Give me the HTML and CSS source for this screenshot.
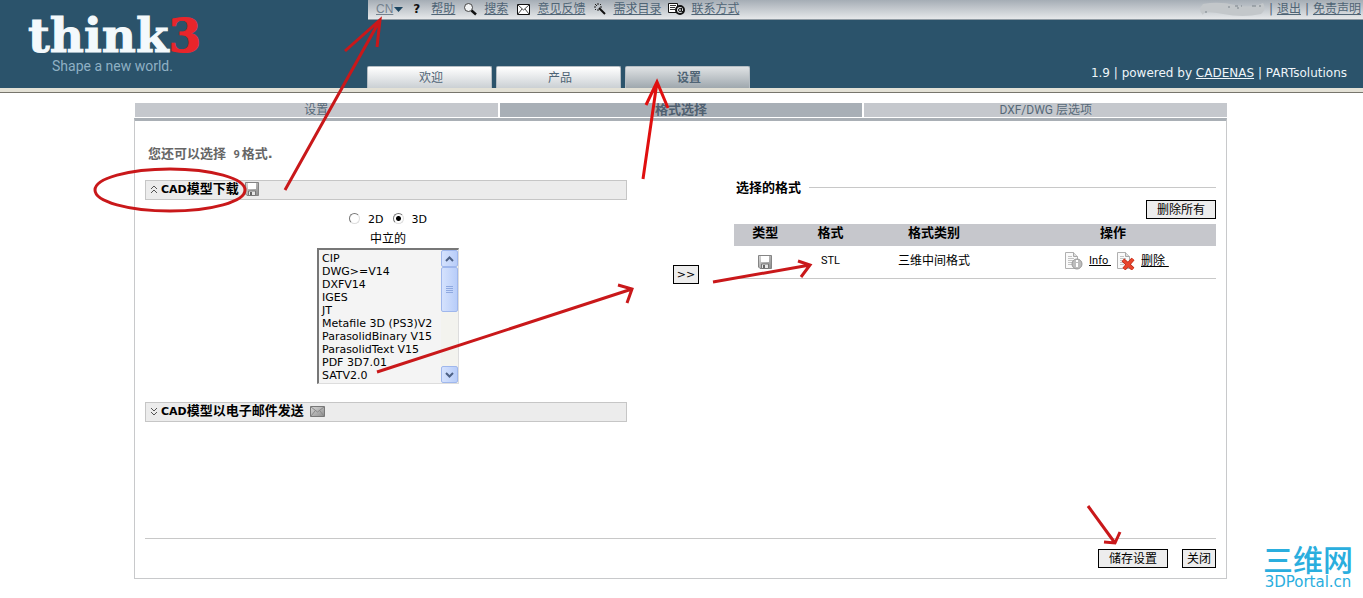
FILE: index.html
```html
<!DOCTYPE html>
<html lang="zh-CN">
<head>
<meta charset="utf-8">
<title>think3 PARTsolutions</title>
<link rel="stylesheet" href="styles.css">
</head>
<body>
<svg class="defs" width="0" height="0" aria-hidden="true">
  <linearGradient id="metal" x1="0" y1="0" x2="1" y2="1"><stop offset="0" stop-color="#d8d8d8"/><stop offset="1" stop-color="#8c8c8c"/></linearGradient>
  <symbol id="disk" viewBox="0 0 14 14">
    <path d="M.5.5h13v13H2L.5 12z" fill="url(#metal)" stroke="#858585"/>
    <path d="M3 1h8v6H3z" fill="#fff"/><path d="M3.500 9h7v4.500h-7z" fill="#e8e8e8" stroke="#777"/><path d="M5 10h2v3H5z" fill="#666"/>
  </symbol>
  <symbol id="sheet" viewBox="0 0 18 18">
    <path d="M.5.5h8l4 4v12H.5z" fill="#fafafa" stroke="#b0b0b0"/>
    <path d="M8.500.5v4h4" fill="#ddd" stroke="#a8a8a8"/>
    <path d="M3 4.500h4M3 6.500h6M3 8.500h6M3 10.500h5M3 12.500h4" fill="none" stroke="#c4c4c4"/>
  </symbol>
</svg>
<header class="header">
  <div class="brand">
    <div class="logo">think<span class="logo-num">3</span></div>
    <div class="slogan">Shape a new world.</div>
  </div>
  <div class="header-main">
    <div class="topbar">
      <nav class="tools">
        <a href="#" class="lang">CN</a>
        <svg class="caret" width="9" height="5" viewBox="0 0 9 5"><path d="M0 0h9L4.500 5z" fill="#1d4661"/></svg>
        <span class="help-mark">?</span>
        <a href="#">帮助</a>
        <svg class="icon" width="13" height="13" viewBox="0 0 13 13"><circle cx="4.500" cy="4.500" r="4" fill="#f2f4f5" stroke="#444"/><path d="M7.500 7.500l4.500 4" stroke="#111" stroke-width="2.500"/></svg>
        <a href="#">搜索</a>
        <svg class="icon" width="13" height="11" viewBox="0 0 13 11"><path d="M.5.5h12v10H.5z" fill="#fff" stroke="#111"/><path d="M1 1l5.500 5L12 1M1 10l4-5M12 10L8 5" fill="none" stroke="#444"/></svg>
        <a href="#">意见反馈</a>
        <svg class="icon" width="12" height="12" viewBox="0 0 12 12"><path d="M5 5l6 6" stroke="#111" stroke-width="2"/><path d="M4 0v2M0 4h2M1 1l2 2M7 1L6 2M1 7l1-1M4 6v2M6 4h2" stroke="#222"/></svg>
        <a href="#">需求目录</a>
        <svg class="icon icon-contact" width="17" height="12" viewBox="0 0 17 12"><path d="M.5.5h9v9h-9z" fill="#fff" stroke="#111"/><path d="M2 2.500h6M2 4.500h5M2 6.500h5" stroke="#333"/><circle cx="12" cy="7" r="4" fill="#dfe2e5" stroke="#111" stroke-width="2"/><circle cx="12" cy="7" r="1.500" fill="none" stroke="#111"/><path d="M13.500 5v3.500h2" fill="none" stroke="#111"/></svg>
        <a href="#">联系方式</a>
      </nav>
      <div class="account">
        <svg class="smudge" width="66" height="16" viewBox="0 0 66 16"><path d="M4 3Q20 0 36 4T64 2Q68 8 62 13Q44 17 24 13T4 14Q-2 9 4 3z" fill="#c3c7ca"/><path d="M29 6h2M36 5h3M38 7h2M42 5h1M53 5h4M60 5h2M6 11h2" stroke="#7b838a"/></svg>
        <span>| <a href="#">退出</a></span><span>|</span><a href="#">免责声明</a>
      </div>
    </div>
    <div class="header-bottom">
      <nav class="tabs">
        <a href="#" class="tab">欢迎</a>
        <a href="#" class="tab">产品</a>
        <a href="#" class="tab tab-active">设置</a>
      </nav>
      <div class="powered">1.9 | powered by <a href="#">CADENAS</a> | PARTsolutions</div>
    </div>
  </div>
</header>
<main class="content">
  <nav class="subtabs">
    <a href="#" class="subtab">设置</a>
    <a href="#" class="subtab subtab-active">格式选择</a>
    <a href="#" class="subtab">DXF/DWG 层选项</a>
  </nav>
  <div class="panel">
    <p class="hint">您还可以选择 <span class="count">9</span>格式.</p>
    <div class="columns">
      <section class="sources">
        <h2 class="bar">
          <svg width="8" height="9" viewBox="0 0 8 9"><path d="M1 4l3-3 3 3M1 8l3-3 3 3" fill="none" stroke="#555"/></svg>
          <span class="bar-title"><span class="latin">CAD</span>模型下载</span>
          <svg width="14" height="14"><use href="#disk"/></svg>
        </h2>
        <div class="picker">
          <div class="radios">
            <input type="radio" name="dim" id="dim2"><label for="dim2">2D</label>
            <input type="radio" name="dim" id="dim3" checked><label for="dim3">3D</label>
          </div>
          <label class="list-label" for="formats">中立的</label>
          <div class="listbox">
            <select id="formats" class="formats" size="10">
              <option>CIP</option><option>DWG&gt;=V14</option><option>DXFV14</option><option>IGES</option><option>JT</option><option>Metafile 3D (PS3)V2</option><option>ParasolidBinary V15</option><option>ParasolidText V15</option><option>PDF 3D7.01</option><option>SATV2.0</option>
            </select>
            <div class="scroll">
              <div class="scroll-btn"><svg width="9" height="6" viewBox="0 0 9 6"><path d="M1 5l3.500-3.500L8 5" fill="none" stroke="#4d6185" stroke-width="2"/></svg></div>
              <div class="thumb"><svg width="7" height="8" viewBox="0 0 7 8"><path d="M0 .5h7M0 2.500h7M0 4.500h7M0 6.500h7" stroke="#8fa9e0"/></svg></div>
              <div class="scroll-gap"></div>
              <div class="scroll-btn"><svg width="9" height="6" viewBox="0 0 9 6"><path d="M1 1l3.500 3.500L8 1" fill="none" stroke="#4d6185" stroke-width="2"/></svg></div>
            </div>
          </div>
        </div>
        <h2 class="bar">
          <svg width="8" height="9" viewBox="0 0 8 9"><path d="M1 1l3 3 3-3M1 5l3 3 3-3" fill="none" stroke="#555"/></svg>
          <span class="bar-title"><span class="latin">CAD</span>模型以电子邮件发送</span>
          <svg width="15" height="11" viewBox="0 0 15 11"><path d="M.5.5h14v10H.5z" fill="url(#metal)" stroke="#777"/><path d="M1 1l6.500 5L14 1M1 10l4-5M14 10l-4-5" fill="none" stroke="#888"/></svg>
        </h2>
      </section>
      <div class="transfer"><button type="button" class="btn btn-add">&gt;&gt;</button></div>
      <section class="selected">
        <h2 class="selected-title">选择的格式</h2>
        <div class="selected-actions"><button type="button" class="btn btn-wide">删除所有</button></div>
        <table class="table">
          <thead><tr><th class="c-type">类型</th><th class="c-format">格式</th><th class="c-class">格式类别</th><th class="c-action">操作</th></tr></thead>
          <tbody><tr>
            <td><svg class="disk" width="14" height="14"><use href="#disk"/></svg></td>
            <td class="small">STL</td>
            <td>三维中间格式</td>
            <td><div class="actions">
              <svg width="18" height="18" viewBox="0 0 18 18"><use href="#sheet" width="18" height="18"/><circle cx="12" cy="12" r="5" fill="#bdbdbd" stroke="#999"/><path d="M12 8v2M12 11v4" stroke="#fff" stroke-width="2"/></svg>
              <a href="#" class="small">Info&nbsp;</a>
              <svg width="18" height="18" viewBox="0 0 18 18"><use href="#sheet" width="18" height="18"/><path d="M6 8l10 9M16 7l-9 10" stroke="#a82010" stroke-width="4"/><path d="M6 8l10 9M16 7l-9 10" stroke="#e8452c" stroke-width="3"/></svg>
              <a href="#">删除&nbsp;</a>
            </div></td>
          </tr></tbody>
        </table>
      </section>
    </div>
    <footer class="footer">
      <button type="button" class="btn btn-wide">储存设置</button>
      <button type="button" class="btn">关闭</button>
    </footer>
  </div>
</main>
<div class="watermark"><div class="wm-name">三维网</div><div class="wm-url">3DPortal.cn</div></div>
<svg class="marks" width="1363" height="598" viewBox="0 0 1363 598" aria-hidden="true">
  <g fill="none" stroke="#c9181a" stroke-width="3">
    <ellipse cx="170" cy="190" rx="75" ry="21"/>
    <path d="M285 190L380 20M345 51L380 20L377 47"/>
    <path d="M377 372L632 289M618 285L632 289L627 303"/>
    <path d="M713 282L810 265M798 261L810 265L801 277"/>
    <path d="M1088 506L1115 543M1104 542L1115 543L1120 532"/>
  </g>
  <path d="M643 179L657 82M646 105L657 82L668 108" fill="none" stroke="#e00f0f" stroke-width="3"/>
</svg>
</body>
</html>
```
FILE: styles.css
```css
* { box-sizing: border-box; }
body {
  margin: 0;
  position: relative;
  display: flow-root;
  min-height: 100vh;
  background: #fff;
  color: #000;
  font: 12px/16px "DejaVu Sans", "Noto Sans CJK SC", sans-serif;
}
.defs { position: absolute; }
svg { flex: none; }
h2, p { margin: 0; }
a { color: inherit; }

.header {
  display: flex;
  height: 93px;
  background: #2b536b;
  border-bottom: 1px solid #77756c;
  box-shadow: inset 0 -4px #e3e1d6;
}
.brand { width: 367px; flex: none; padding: 14px 0 0 28px; }
.logo {
  font: bold 47px/44px "DejaVu Serif", serif;
  color: #f3f9fc;
  -webkit-text-stroke: 1px;
}
.logo-num { color: #e8252b; }
.slogan {
  padding-left: 24px;
  font: 14px/16px Roboto, sans-serif;
  color: #8fb0c4;
}
.header-main { flex: 1; display: flex; flex-direction: column; padding-bottom: 4px; }
.topbar {
  display: flex;
  justify-content: space-between;
  height: 20px;
  margin-left: 1px;
  padding: 0 2px 0 8px;
  background: linear-gradient(#a5adb5, #e6e8ea);
  border-bottom: 1px solid #8f9aa3;
  color: #4f6475;
}
.tools, .account { display: flex; align-items: center; height: 18px; }
.lang { font-family: "Liberation Sans", sans-serif; color: #74828f; }
.caret { margin: 0 10px 0 1px; }
.help-mark { width: 8px; margin-right: 10px; font-weight: bold; color: #111; }
.icon { margin: 0 7px 0 9px; }
.icon-contact { margin: 0 6px 0 7px; }
.account { gap: 4px; }
.header-bottom { flex: 1; display: flex; justify-content: space-between; align-items: flex-end; }
.tabs { display: flex; gap: 4px; }
.tab {
  width: 125px;
  height: 22px;
  padding-left: 3px;
  border: 1px solid #b5bdc3;
  border-bottom: 0;
  border-radius: 2px 2px 0 0;
  background: linear-gradient(#fff, #cbd0d4);
  color: #4f6475;
  line-height: 22px;
  text-align: center;
  text-decoration: none;
}
.tab-active { background: linear-gradient(#dfe2e4, #9fa8ae); font-weight: bold; }
.powered { padding: 0 16px 7px 0; color: #eef5f9; }

.content { margin: 10px 136px 0 134px; }
.subtabs { display: flex; gap: 2px; padding: 0 0 1px 1px; }
.subtab {
  flex: 1;
  height: 14px;
  background: #c5c8cd;
  color: #566878;
  line-height: 14px;
  text-align: center;
  text-decoration: none;
  font-family: Roboto, "Noto Sans CJK SC", sans-serif;
}
.subtab-active { background: #a8afb6; font-size: 13px; font-weight: bold; color: #4f6070; }
.panel {
  border: 1px solid #c8c9cb;
  border-top: 3px solid #a9afb5;
  padding: 23px 10px 10px;
}
.hint { padding: 0 0 1px 3px; font-size: 13px; line-height: 20px; font-weight: bold; color: #666; }
.count { margin: 0 2px 0 3px; font: bold 11px Roboto, sans-serif; }
.columns { display: grid; grid-template-columns: 482fr 107fr 482fr; padding-top: 15px; }
.bar {
  display: flex;
  align-items: center;
  height: 20px;
  padding: 0 0 2px 4px;
  background: #ececec;
  border: 1px solid #c6c6c6;
  font-size: 13px;
  line-height: 16px;
}
.bar-title { margin: 0 6px 0 3px; }
.latin { font-size: 11px; }
.picker {
  display: flex;
  flex-direction: column;
  align-items: center;
  padding: 10px 0 18px 4px;
}
.radios { display: flex; align-items: center; height: 20px; padding-right: 9px; font-size: 11px; }
.radios input {
  appearance: none;
  width: 11px;
  height: 11px;
  margin: 0 8px 4px 9px;
  border: 1px solid;
  border-color: #777 #ddd #ddd #777;
  border-radius: 50%;
  background: #fff;
}
.radios input:checked { background: radial-gradient(circle, #000 0 2px, #fff 3px); }
.list-label { line-height: 18px; }
.listbox {
  display: flex;
  width: 142px;
  height: 136px;
  border: 1px solid #ddd;
  border-top: 2px solid #777;
  border-left: 2px solid #777;
  background: #f4f4f4;
}
.formats {
  flex: 1;
  min-width: 0;
  height: 133px;
  padding: 2px 0 0;
  border: 0;
  outline: 0;
  background: none;
  color: #000;
  font: 11px/13px "DejaVu Sans", sans-serif;
  overflow: hidden;
}
.formats option { min-height: 13px; height: 13px; padding: 0 3px; line-height: 13px; }
.scroll {
  width: 17px;
  display: flex;
  flex-direction: column;
  background: #f3f3ee;
}
.scroll-btn, .thumb {
  display: flex;
  align-items: center;
  justify-content: center;
  height: 17px;
  border: 1px solid #9fb7ec;
  border-radius: 2px;
  background: linear-gradient(90deg, #d5e2fd, #b8cdf9);
}
.thumb { height: 45px; }
.scroll-gap { flex: 1; }
.transfer { padding: 85px 0 0 46px; }
.btn {
  height: 19px;
  padding: 0 4px;
  border: 1px solid #000;
  border-radius: 0;
  background: #ededed;
  color: #000;
  font: 12px/16px "DejaVu Sans", "Noto Sans CJK SC", sans-serif;
}
.btn-add { width: 26px; padding: 0; font-size: 11px; }
.btn-wide { padding: 0 10px; }
.selected-title {
  display: flex;
  align-items: center;
  gap: 8px;
  padding-left: 2px;
  font-size: 13px;
  line-height: 15px;
}
.selected-title::after { content: ""; flex: 1; height: 1px; background: #c8c8c8; }
.selected-actions { display: flex; justify-content: flex-end; padding: 5px 0; }
.table { width: 100%; border-collapse: collapse; table-layout: fixed; text-align: center; }
.table th { height: 22px; padding: 0 0 4px; background: #c6c7cc; font-size: 13px; line-height: 16px; }
.table td { height: 32px; padding: 0 0 2px; border-bottom: 1px solid #c8c8c8; }
.c-type { width: 13%; }
.c-format { width: 14%; }
.c-class { width: 29%; }
.table .c-action { padding-left: 6px; }
.disk { display: block; margin: 2px auto 0; }
.table .small { font-family: Roboto, sans-serif; font-size: 11px; }
.actions { display: flex; align-items: center; justify-content: center; gap: 6px; padding-left: 14px; }
.footer {
  display: flex;
  justify-content: flex-end;
  gap: 14px;
  margin-top: 116px;
  padding-top: 10px;
  border-top: 1px solid #c8c8c8;
}
.watermark {
  position: absolute;
  top: 542px;
  right: 9px;
  width: 92px;
  color: #2aaede;
  text-align: center;
}
.wm-name { font: 500 30px/32px "Noto Sans CJK SC", sans-serif; }
.wm-url { font: 15px/16px "DejaVu Sans", sans-serif; white-space: nowrap; }
.marks { position: absolute; top: 0; left: 0; pointer-events: none; }
```
